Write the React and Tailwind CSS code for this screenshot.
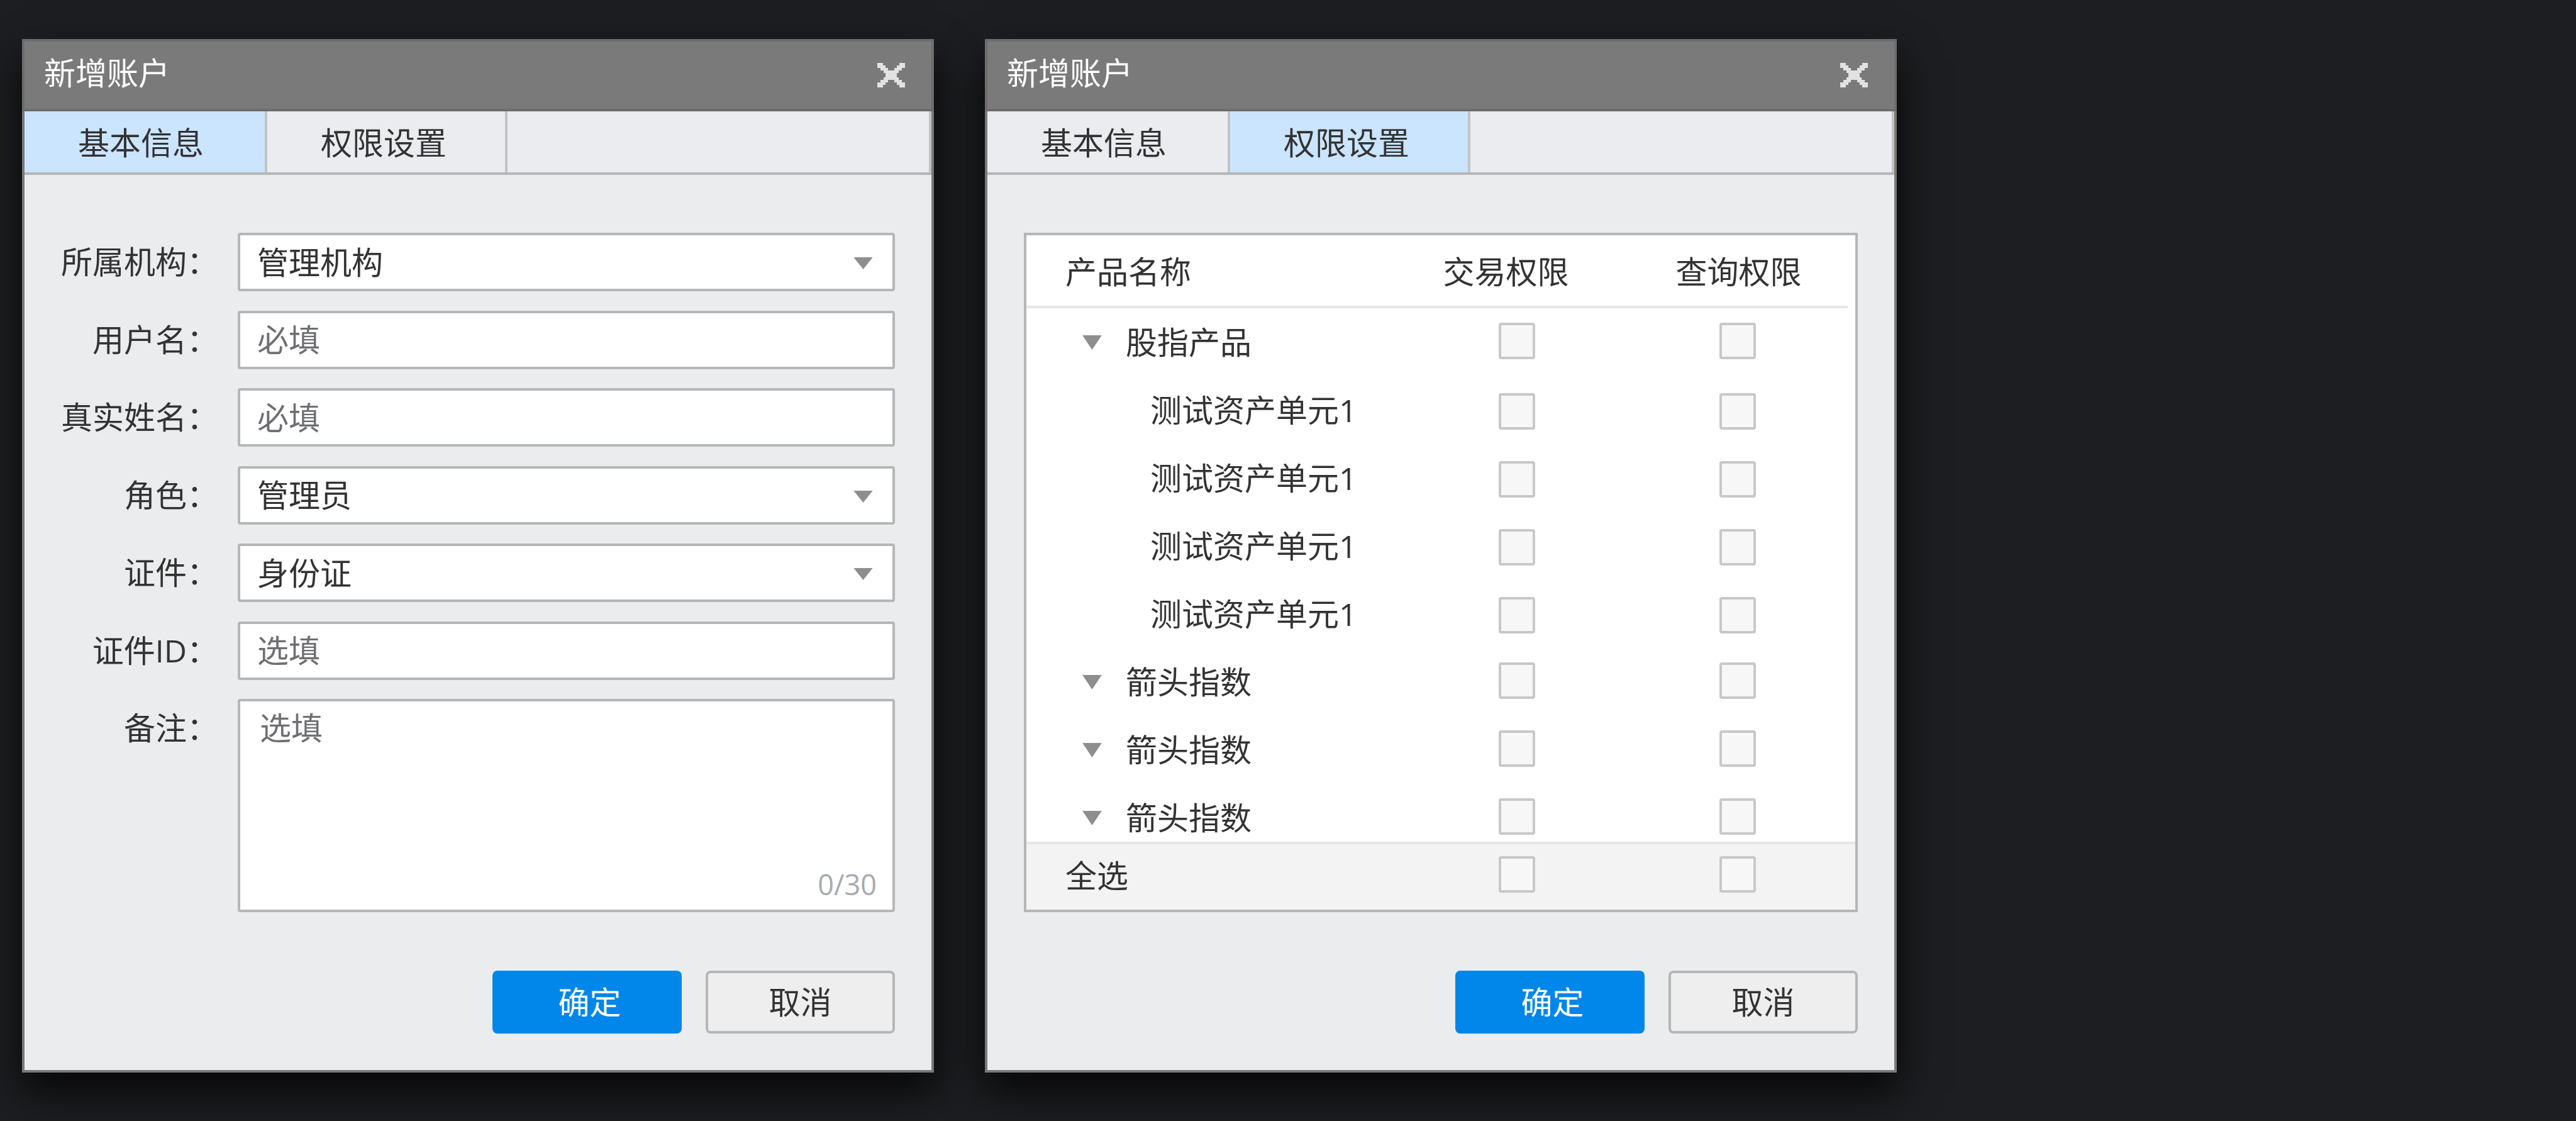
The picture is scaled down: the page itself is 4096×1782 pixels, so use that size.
import { useState } from "react";

function CloseIcon() {
  return (
    <svg viewBox="0 0 46 40" className="h-[39px] w-[44px]" fill="#e2e2e2" shapeRendering="crispEdges" aria-hidden="true">
      <path d="M0 0h9v4h5v4h4v4h10v-4h4v-4h5v-4h9v8h-5v4h-5v4h-4v8h4v4h5v4h5v8h-9v-4h-5v-4h-4v-4h-10v4h-4v4h-5v4h-9v-8h5v-4h5v-4h4v-8h-4v-4h-5v-4h-5z" />
    </svg>
  );
}

function Dialog({ title, tabs, active, children }) {
  const [current, setCurrent] = useState(active);
  return (
    <section
      aria-label={title}
      className="flex max-w-[1450px] flex-1 flex-col border-4 border-t-0 border-[#7a7a7a] bg-[#ebecee] shadow-[0_31px_62px_rgba(0,0,0,0.8)]"
    >
      <header className="-mx-1 flex h-[115px] items-center justify-between border-4 border-[#6e6c6c] bg-[#7a7a7a] pr-[42px] pl-[31px]">
        <h2 className="pb-2 text-[50px] leading-[60px] text-white">{title}</h2>
        <button type="button" aria-label="关闭">
          <CloseIcon />
        </button>
      </header>
      <div role="tablist" className="flex h-[101px] border-b-4 border-[#b5b6b6] bg-[#ebecf0]">
        {tabs.map((tab) => (
          <button
            key={tab}
            type="button"
            role="tab"
            aria-selected={current === tab}
            onClick={() => setCurrent(tab)}
            className={
              "w-[382px] border-r-4 border-[#c3c3c3] pt-[2px] pl-[85px] text-left text-[50px] leading-[60px] first:w-[386px] " +
              (current === tab ? "bg-[#cbe5fe]" : "")
            }
          >
            {tab}
          </button>
        ))}
        <div className="flex-1 border-r-4 border-[#c3c3c3]" />
      </div>
      <div className="px-[58px] pt-[92px] pb-[58px]">
        {children}
        <div className="mt-[93px] flex justify-end gap-[38px]">
          <button type="button" className="h-[100px] w-[301px] rounded-lg bg-[#0087e9] pl-2 text-[50px] leading-[60px] text-white">
            确定
          </button>
          <button
            type="button"
            className="h-[100px] w-[301px] rounded-lg border-4 border-[#b5b6b6] bg-[#eeeeee] text-[50px] leading-[60px]"
          >
            取消
          </button>
        </div>
      </div>
    </section>
  );
}

const boxClass =
  "h-[93px] w-full appearance-none rounded-[4px] border-4 border-[#b5b6b6] bg-white px-[27px] text-[50px] leading-[60px] outline-none placeholder:text-[#6e6f73] placeholder:opacity-100";

const fields = [
  { id: "org", label: "所属机构", options: ["管理机构"] },
  { id: "user", label: "用户名", placeholder: "必填" },
  { id: "name", label: "真实姓名", placeholder: "必填" },
  { id: "role", label: "角色", options: ["管理员"] },
  { id: "cert", label: "证件", options: ["身份证"] },
  { id: "certId", label: "证件ID", placeholder: "选填" },
];

function Field({ id, label, children }) {
  return (
    <div className="flex items-start">
      <label htmlFor={id} className="w-[250px] shrink-0 py-4 text-right text-[50px] leading-[60px]">
        {label}：
      </label>
      <div className="relative ml-[31px] min-w-0 flex-1">{children}</div>
    </div>
  );
}

function BasicForm() {
  const [note, setNote] = useState("");
  return (
    <form className="flex min-h-[1080px] flex-col justify-between">
      {fields.map((f) => (
        <Field key={f.id} id={f.id} label={f.label}>
          {f.options ? (
            <>
              <select id={f.id} className={boxClass}>
                {f.options.map((o) => (
                  <option key={o}>{o}</option>
                ))}
              </select>
              <svg viewBox="0 0 32 20" className="pointer-events-none absolute top-[39px] right-[35px] h-[19px] w-[31px]" fill="#8e8e8e" aria-hidden="true">
                <path d="M0 0h32L16 20z" />
              </svg>
            </>
          ) : (
            <input id={f.id} type="text" placeholder={f.placeholder} className={boxClass} />
          )}
        </Field>
      ))}
      <Field id="note" label="备注">
        <textarea
          id="note"
          maxLength={30}
          value={note}
          onChange={(e) => setNote(e.target.value)}
          placeholder="选填"
          className="block h-[339px] w-full resize-none rounded-[4px] border-4 border-[#b5b6b6] bg-white px-[31px] py-3 text-[50px] leading-[60px] outline-none placeholder:text-[#6e6f73] placeholder:opacity-100"
        />
        <span className="absolute right-[29px] bottom-4 text-[45px] leading-[56px] text-[#a7aaaf]">{note.length}/30</span>
      </Field>
    </form>
  );
}

const products = [
  { name: "股指产品", group: true },
  { name: "测试资产单元1" },
  { name: "测试资产单元1" },
  { name: "测试资产单元1" },
  { name: "测试资产单元1" },
  { name: "箭头指数", group: true },
  { name: "箭头指数", group: true },
  { name: "箭头指数", group: true },
];

const cols = "grid grid-cols-[1fr_351px_351px] items-center";

function Check({ label, raised }) {
  return (
    <td className={"flex justify-center " + (raised ? "pb-1" : "pt-1")}>
      <input
        type="checkbox"
        aria-label={label}
        className="size-[58px] appearance-none rounded-[4px] border-4 border-[#c8c8c8] bg-[#f7f7f7] checked:bg-[#0087e9]"
      />
    </td>
  );
}

function PermissionTable() {
  return (
    <table className="flex h-[1080px] flex-col border-4 border-[#b5b6b6] bg-white text-[50px] leading-[60px]">
      <thead className="block">
        <tr className={cols + " mr-3 h-[116px] border-b-4 border-[#e6e6e6] pt-[3px]"}>
          <th className="pl-[62px] text-left font-normal">产品名称</th>
          <th className="pr-[34px] text-center font-normal">交易权限</th>
          <th className="pl-1 text-center font-normal">查询权限</th>
        </tr>
      </thead>
      <tbody className="block min-h-0 flex-1 overflow-y-auto [scrollbar-width:none]">
        {products.map((p, i) => (
          <tr key={i} className={cols + " mr-3 h-[108px]"}>
            {p.group ? (
              <td className="flex items-center pl-[89px]">
                <button type="button" aria-label="展开或收起" className="mr-[38px]">
                  <svg viewBox="0 0 32 24" className="h-[23px] w-[31px]" fill="#8e8e8e" aria-hidden="true">
                    <path d="M0 0h32L16 24z" />
                  </svg>
                </button>
                {p.name}
              </td>
            ) : (
              <td className="pl-[197px]">{p.name}</td>
            )}
            <Check label={p.name + " 交易权限"} raised={p.group} />
            <Check label={p.name + " 查询权限"} raised={p.group} />
          </tr>
        ))}
      </tbody>
      <tfoot className="block">
        <tr className={cols + " h-[108px] border-t-4 border-[#e6e6e6] bg-[#f3f3f3] pr-3 pb-1"}>
          <td className="pl-[62px]">全选</td>
          <Check label="全选 交易权限" raised />
          <Check label="全选 查询权限" raised />
        </tr>
      </tfoot>
    </table>
  );
}

const tabs = ["基本信息", "权限设置"];

export default function App() {
  return (
    <main className="flex min-h-screen items-start gap-[81px] bg-[#1d1e21] px-[35px] pt-[62px] pb-[77px] font-['Open_Sans','Noto_Sans_CJK_SC',sans-serif] text-[#333333]">
      <Dialog title="新增账户" tabs={tabs} active="基本信息">
        <BasicForm />
      </Dialog>
      <Dialog title="新增账户" tabs={tabs} active="权限设置">
        <PermissionTable />
      </Dialog>
    </main>
  );
}
